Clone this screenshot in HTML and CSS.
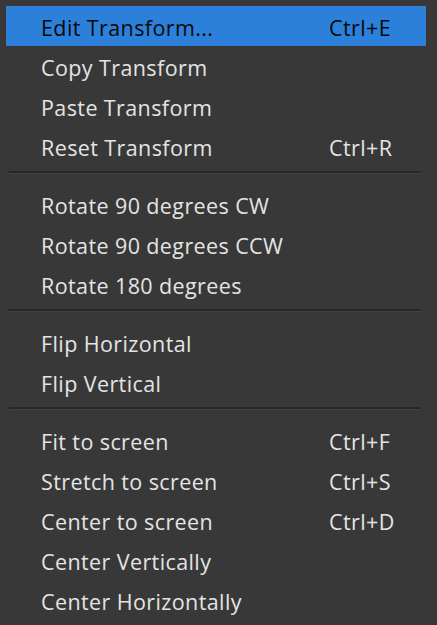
FILE: index.html
```html
<!doctype html>
<html lang="en">
<head>
    <meta charset="UTF-8">
    <title>Transform menu</title>
    <link rel="stylesheet" href="styles.css">
</head>
<body>
    <ul class="menu">
        <li class="item active"><span class="label">Edit Transform...</span><span class="key">Ctrl+E</span></li>
        <li class="item"><span class="label">Copy Transform</span></li>
        <li class="item"><span class="label">Paste Transform</span></li>
        <li class="item"><span class="label">Reset Transform</span><span class="key">Ctrl+R</span></li>
        <li class="sep"></li>
        <li class="item"><span class="label">Rotate 90 degrees CW</span></li>
        <li class="item"><span class="label">Rotate 90 degrees CCW</span></li>
        <li class="item"><span class="label">Rotate 180 degrees</span></li>
        <li class="sep"></li>
        <li class="item"><span class="label">Flip Horizontal</span></li>
        <li class="item"><span class="label">Flip Vertical</span></li>
        <li class="sep"></li>
        <li class="item"><span class="label">Fit to screen</span><span class="key">Ctrl+F</span></li>
        <li class="item"><span class="label">Stretch to screen</span><span class="key">Ctrl+S</span></li>
        <li class="item"><span class="label">Center to screen</span><span class="key">Ctrl+D</span></li>
        <li class="item"><span class="label">Center Vertically</span></li>
        <li class="item"><span class="label">Center Horizontally</span></li>
    </ul>
</body>
</html>
```

FILE: styles.css
```css
html, body {
    margin: 0;
    background: #383838;
}

body {
    font-family: "Open Sans", "Noto Sans", sans-serif;
    font-size: 21.5px;
    letter-spacing: 0.4px;
    color: #e4e4e4;
}

.menu {
    list-style: none;
    margin: 0;
    padding: 6px 11px 0 6px;
}

.item {
    display: flex;
    align-items: center;
    height: 40px;
    padding: 2px 0 0 35px;
    box-sizing: border-box;
}

.item .label {
    width: 288px;
    white-space: nowrap;
}

.item.active {
    background: #2c80da;
    color: #0a0a0a;
}

.sep {
    height: 18px;
    display: flex;
    flex-direction: column;
    padding: 0 5px 0 3px;
    box-sizing: border-box;
}

.sep::before {
    content: "";
    margin-top: 5px;
    height: 2px;
    background: #272727;
    border-bottom: 1px solid #424242;
}
```
